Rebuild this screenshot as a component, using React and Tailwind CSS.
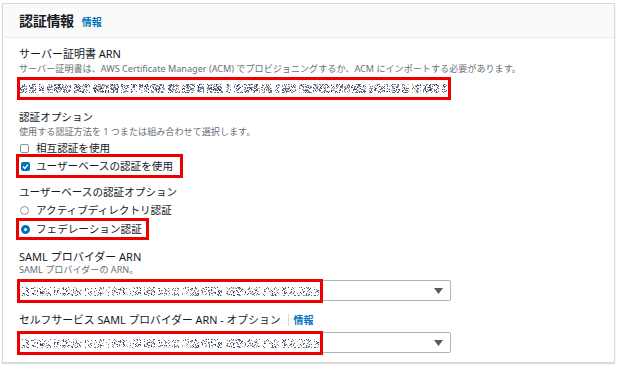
import React from "react";

function rng(seed) {
  let s = seed >>> 0;
  return () => {
    s = (s * 1664525 + 1013904223) >>> 0;
    return s / 4294967296;
  };
}

const PALETTE = ["#2f3a4a", "#555c66", "#8a8f96", "#b4b8bd", "#4f79b8", "#c89a6b", "#6d747c", "#cfd3d8", "#3b5f99"];

function Noise({ width, height = 14, seed = 1, density = 0.38, top = 3, band = 8 }) {
  const r = rng(seed);
  const rects = [];
  let x = 0;
  while (x < width) {
    const wordLen = 4 + Math.floor(r() * 14);
    for (let i = 0; i < wordLen && x < width; i++, x++) {
      for (let y = top; y < top + band; y++) {
        if (r() < density) {
          rects.push(
            <rect key={x + "-" + y} x={x} y={y} width="1" height="1" fill={PALETTE[Math.floor(r() * PALETTE.length)]} />
          );
        }
      }
    }
    x += 1 + Math.floor(r() * 3);
  }
  return (
    <svg width={width} height={height} className="block" shapeRendering="crispEdges">
      {rects}
    </svg>
  );
}

function Caret() {
  return (
    <svg width="9" height="6" viewBox="0 0 9 6" className="block">
      <path d="M0 0 H9 L4.5 6 Z" fill="#545b64" />
    </svg>
  );
}

function SelectBox({ seed }) {
  return (
    <div className="relative -ml-px w-[433px] h-[21px] border border-[#aab7b8] rounded-[2px] bg-white flex items-center">
      <div className="pl-[3px] w-[300px] overflow-hidden">
        <Noise width={298} seed={seed} density={0.3} top={3} band={9} />
      </div>
      <div className="ml-auto mr-[7px]">
        <Caret />
      </div>
      <div className="absolute left-[-2px] top-[-2px] w-[306px] h-[24px] border-[3px] border-[#ee0000]" />
    </div>
  );
}

export default function App() {
  return (
    <div className="w-[617px] h-[365px] bg-white pt-[3px] pl-[2px] font-['Noto_Sans','Noto_Sans_CJK_JP',sans-serif] text-[#16191f]">
      <div className="w-[613px] h-[360px] border border-[#d5dbdb] shadow-[0_1px_1px_rgba(0,28,36,0.15)] bg-white">
        <div className="h-[34px] bg-[#fafafa] border-b border-[#eaeded] flex items-center pl-4 gap-[8px]">
          <span className="text-[14px] font-bold leading-none tracking-[-0.3px]">認証情報</span>
          <span className="text-[10px] font-bold text-[#0073bb] leading-none mt-[2px]">情報</span>
        </div>

        <div className="pl-4">
          <div className="mt-[8px] h-[16px] leading-[16px] text-[11px]">サーバー証明書 ARN</div>
          <div className="mt-[1px] h-[12px] leading-[12px] text-[9.1px] text-[#687078]">
            サーバー証明書は、AWS Certificate Manager (ACM) でプロビジョニングするか、ACM にインポートする必要があります。
          </div>
          <div className="mt-[5px] ml-[1px] w-[428px] h-[17px] ring-3 ring-[#ee0000] bg-white overflow-hidden">
            <Noise width={428} height={17} seed={7} density={0.5} top={4} band={9} />
          </div>

          <div className="mt-[12px] h-[16px] leading-[16px] text-[10.6px]">認証オプション</div>
          <div className="mt-[1px] h-[12px] leading-[12px] text-[9.1px] text-[#687078]">
            使用する認証方法を 1 つまたは組み合わせて選択します。
          </div>
          <div className="mt-[2px] h-[16px] flex items-center text-[10.6px]">
            <span className="ml-[1px] w-[9px] h-[9px] border border-[#879596] rounded-[2px] bg-white" />
            <span className="ml-[7px] leading-none">相互認証を使用</span>
          </div>
          <div className="mt-[1px] w-[161px] h-[18px] ring-3 ring-[#ee0000] flex items-center text-[10.6px]">
            <span className="ml-[2px] w-[9px] h-[9px] rounded-[2px] bg-[#0073bb] flex items-center justify-center">
              <svg width="7" height="7" viewBox="0 0 7 7">
                <path d="M1 3.6 L2.8 5.4 L6 1.6" stroke="white" strokeWidth="1.4" fill="none" />
              </svg>
            </span>
            <span className="ml-[6px] leading-none">ユーザーベースの認証を使用</span>
          </div>

          <div className="mt-[9px] h-[16px] leading-[16px] text-[10.6px]">ユーザーベースの認証オプション</div>
          <div className="mt-[2px] h-[16px] flex items-center text-[10.6px]">
            <span className="ml-[1px] w-[9px] h-[9px] border border-[#879596] rounded-full bg-white" />
            <span className="ml-[7px] leading-none">アクティブディレクトリ認証</span>
          </div>
          <div className="mt-[3px] w-[127px] h-[16px] ring-3 ring-[#ee0000] flex items-center text-[10.6px]">
            <span className="ml-[2px] w-[9px] h-[9px] border-[3px] border-[#0073bb] rounded-full bg-white" />
            <span className="ml-[6px] leading-none">フェデレーション認証</span>
          </div>

          <div className="mt-[13px] h-[14px] leading-[14px] text-[11px]">SAML プロバイダー ARN</div>
          <div className="h-[12px] leading-[12px] text-[9.1px] text-[#687078]">SAML プロバイダーの ARN。</div>
          <div className="mt-[4px]">
            <SelectBox seed={21} />
          </div>

          <div className="mt-[11px] h-[16px] flex items-center text-[10.8px]">
            <span className="leading-none">セルフサービス SAML プロバイダー ARN - オプション</span>
            <span className="ml-[7px] w-px h-[12px] bg-[#d5dbdb]" />
            <span className="ml-[5px] text-[10px] font-bold text-[#0073bb] leading-none">情報</span>
          </div>
          <div className="mt-[4px]">
            <SelectBox seed={21} />
          </div>
        </div>
      </div>
    </div>
  );
}
